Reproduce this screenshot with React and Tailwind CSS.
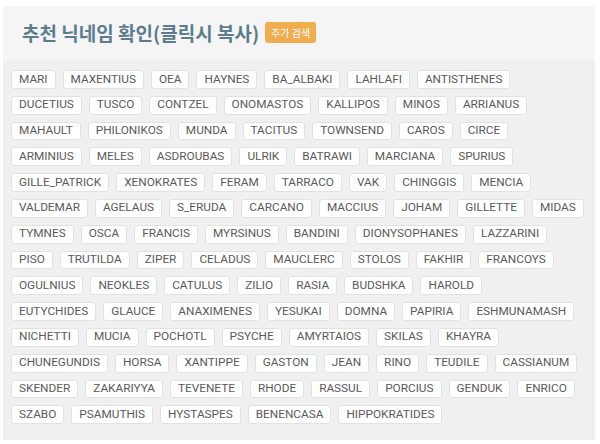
import React from "react";

const rows = [
  ["MARI", "MAXENTIUS", "OEA", "HAYNES", "BA_ALBAKI", "LAHLAFI", "ANTISTHENES"],
  ["DUCETIUS", "TUSCO", "CONTZEL", "ONOMASTOS", "KALLIPOS", "MINOS", "ARRIANUS"],
  ["MAHAULT", "PHILONIKOS", "MUNDA", "TACITUS", "TOWNSEND", "CAROS", "CIRCE"],
  ["ARMINIUS", "MELES", "ASDROUBAS", "ULRIK", "BATRAWI", "MARCIANA", "SPURIUS"],
  ["GILLE_PATRICK", "XENOKRATES", "FERAM", "TARRACO", "VAK", "CHINGGIS", "MENCIA"],
  ["VALDEMAR", "AGELAUS", "S_ERUDA", "CARCANO", "MACCIUS", "JOHAM", "GILLETTE", "MIDAS"],
  ["TYMNES", "OSCA", "FRANCIS", "MYRSINUS", "BANDINI", "DIONYSOPHANES", "LAZZARINI"],
  ["PISO", "TRUTILDA", "ZIPER", "CELADUS", "MAUCLERC", "STOLOS", "FAKHIR", "FRANCOYS"],
  ["OGULNIUS", "NEOKLES", "CATULUS", "ZILIO", "RASIA", "BUDSHKA", "HAROLD"],
  ["EUTYCHIDES", "GLAUCE", "ANAXIMENES", "YESUKAI", "DOMNA", "PAPIRIA", "ESHMUNAMASH"],
  ["NICHETTI", "MUCIA", "POCHOTL", "PSYCHE", "AMYRTAIOS", "SKILAS", "KHAYRA"],
  ["CHUNEGUNDIS", "HORSA", "XANTIPPE", "GASTON", "JEAN", "RINO", "TEUDILE", "CASSIANUM"],
  ["SKENDER", "ZAKARIYYA", "TEVENETE", "RHODE", "RASSUL", "PORCIUS", "GENDUK", "ENRICO"],
  ["SZABO", "PSAMUTHIS", "HYSTASPES", "BENENCASA", "HIPPOKRATIDES"],
];

export default function App() {
  return (
    <div className="w-[600px] h-[444px] bg-white pt-[6px] pl-[3px]">
      <div className="w-[592px] h-[434px] bg-[#f0f0f0] flex flex-col">
        <div className="h-[54px] bg-[#f5f5f5] flex items-center pl-[19px] pb-[2px] gap-[6px]">
          <span
            className="text-[19px] font-bold text-[#5b7d8e] leading-none"
            style={{ fontFamily: '"Noto Sans CJK KR", "Noto Sans", sans-serif' }}
          >
            추천 닉네임 확인(클릭시 복사)
          </span>
          <span
            className="h-[21px] w-[51px] justify-center flex items-center bg-[#f0ad4e] text-white text-[10px] rounded-[3px]"
            style={{ fontFamily: '"Noto Sans CJK KR", "Noto Sans", sans-serif' }}
          >
            추가 검색
          </span>
        </div>
        <div className="flex flex-col gap-[7px] pl-[8px] pt-[10px]">
          {rows.map((row, i) => (
            <div key={i} className="flex gap-[7px]">
              {row.map((n) => (
                <span
                  key={n}
                  className="h-[18.8px] px-[7px] flex items-center bg-white border border-[#e2e2e2] rounded-[3px] text-[11.8px] text-[#5a5a5a] leading-none"
                  style={{ fontFamily: "Roboto, sans-serif" }}
                >
                  {n}
                </span>
              ))}
            </div>
          ))}
        </div>
      </div>
    </div>
  );
}
